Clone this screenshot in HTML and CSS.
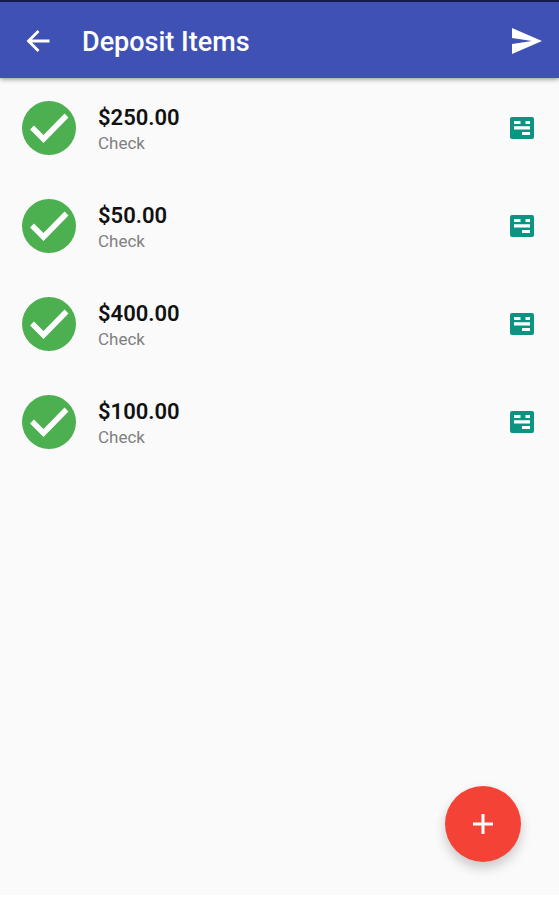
FILE: index.html
```html
<!DOCTYPE html>
<html lang="en">
<head>
<meta charset="utf-8">
<meta name="viewport" content="width=device-width, initial-scale=1">
<title>Deposit Items</title>
<link rel="stylesheet" href="styles.css">
</head>
<body>
<svg class="defs" aria-hidden="true">
  <symbol id="done" viewBox="0 0 54 54"><circle cx="27" cy="27" r="27"/><path d="M10 26.500L21.500 38L44.500 14.500" fill="none" stroke="#fff" stroke-width="5.500"/></symbol>
  <symbol id="sheet" viewBox="0 0 24 24"><rect y="1" width="24" height="22" rx="2"/><path d="M4 5h6.500v3H4zM15.500 5H20v3h-4.500zM4 10.200h16v3.400H4zM12 16h8v3h-8z" fill="#fff"/></symbol>
</svg>
<header class="bar">
  <button class="icon-button" type="button" aria-label="Back"><svg width="24" height="24" viewBox="0 0 24 24"><path d="M23.500 12H3M12.500 2L2.500 12l10 10" fill="none" stroke="currentColor" stroke-width="2.800"/></svg></button>
  <h1 class="title">Deposit Items</h1>
  <button class="icon-button" type="button" aria-label="Send"><svg width="30" height="26" viewBox="0 0 30 26"><path d="M0 0L30 13L0 26V16L20 13L0 10z" fill="currentColor"/></svg></button>
</header>
<main class="content">
  <ul class="list">
    <li class="item"><svg class="done"><use href="#done"/></svg><div class="text"><div class="amount">$250.00</div><div class="kind">Check</div></div><button class="icon-button sheet" type="button" aria-label="Details of $250.00 check"><svg width="24" height="24"><use href="#sheet"/></svg></button></li>
    <li class="item"><svg class="done"><use href="#done"/></svg><div class="text"><div class="amount">$50.00</div><div class="kind">Check</div></div><button class="icon-button sheet" type="button" aria-label="Details of $50.00 check"><svg width="24" height="24"><use href="#sheet"/></svg></button></li>
    <li class="item"><svg class="done"><use href="#done"/></svg><div class="text"><div class="amount">$400.00</div><div class="kind">Check</div></div><button class="icon-button sheet" type="button" aria-label="Details of $400.00 check"><svg width="24" height="24"><use href="#sheet"/></svg></button></li>
    <li class="item"><svg class="done"><use href="#done"/></svg><div class="text"><div class="amount">$100.00</div><div class="kind">Check</div></div><button class="icon-button sheet" type="button" aria-label="Details of $100.00 check"><svg width="24" height="24"><use href="#sheet"/></svg></button></li>
  </ul>
</main>
<button class="fab" type="button" aria-label="Add item"><svg width="20" height="20" viewBox="0 0 20 20"><path d="M10 0v20M0 10h20" stroke="currentColor" stroke-width="3"/></svg></button>
</body>
</html>
```
FILE: styles.css
```css
* {
  box-sizing: border-box;
}

body {
  display: flex;
  flex-direction: column;
  min-height: 100vh;
  margin: 0;
  padding-bottom: 5px;
  background: #fff;
  font-family: Roboto, sans-serif;
}

.defs {
  position: absolute;
  width: 0;
  height: 0;
}

.bar {
  display: flex;
  align-items: center;
  height: 78px;
  padding: 2px 17px 0 26px;
  border-top: 2px solid #151b4d;
  background: #3f51b5;
  color: #fff;
  box-shadow: 0 1px 5px rgba(0, 0, 0, 0.45);
  z-index: 1;
}

.icon-button {
  display: flex;
  padding: 0;
  border: 0;
  background: none;
  color: inherit;
}

.title {
  flex: 1;
  margin: 0 0 0 32px;
  padding-top: 2px;
  font-size: 27px;
  line-height: 32px;
  font-weight: 500;
}

.content {
  flex: 1;
  background: #fafafa;
}

.list {
  margin: 0;
  padding: 1px 0 0;
  list-style: none;
}

.item {
  display: flex;
  align-items: center;
  height: 98px;
  padding: 0 25px 0 22px;
}

.done {
  width: 54px;
  height: 54px;
  fill: #4caf50;
}

.text {
  flex: 1;
  margin-left: 22px;
  padding-top: 4px;
}

.amount {
  color: #111;
  font-size: 22px;
  line-height: 26px;
  font-weight: 600;
}

.kind {
  color: #808080;
  font-size: 17px;
  line-height: 24px;
}

.sheet {
  fill: #0b9482;
}

.fab {
  position: fixed;
  right: 38px;
  bottom: 38px;
  display: flex;
  align-items: center;
  justify-content: center;
  width: 76px;
  height: 76px;
  padding: 0;
  border: 0;
  border-radius: 50%;
  background: #f44336;
  color: #fff;
  box-shadow: 0 6px 12px rgba(0, 0, 0, 0.2);
}
```
